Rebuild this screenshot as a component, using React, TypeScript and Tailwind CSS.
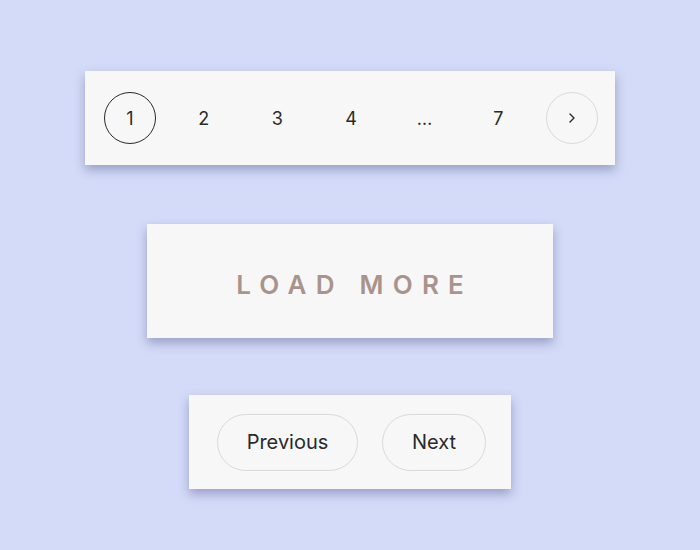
import React from "react";

const pages = ["1", "2", "3", "4", "…", "7"];

export default function App() {
  return (
    <div
      className="w-[700px] h-[550px] bg-[#d4dbf8] flex flex-col items-center"
      style={{ fontFamily: "Inter, 'Noto Sans', sans-serif" }}
    >
      {/* numbered pagination */}
      <div className="mt-[71px] w-[530px] h-[94px] bg-[#f7f7f7] shadow-[0_5px_10px_rgba(40,50,110,0.35)] flex items-center justify-between pl-[19px] pr-[17px]">
        {pages.map((p, i) => (
          <div
            key={p}
            className={
              i === 0
                ? "w-[52px] h-[52px] rounded-full border-[1.5px] border-[#2a2a2a] flex items-center justify-center text-[18px] text-[#2a2a2a]"
                : "w-[52px] h-[52px] rounded-full flex items-center justify-center text-[18px] text-[#2a2a2a]"
            }
          >
            {p}
          </div>
        ))}
        <div className="w-[52px] h-[52px] rounded-full border border-[#d9d9d9] flex items-center justify-center text-[#2a2a2a]">
          <svg width="10" height="12" viewBox="0 0 10 12" fill="none">
            <path d="M3 2l4 4-4 4" stroke="#2a2a2a" strokeWidth="1.4" strokeLinecap="round" strokeLinejoin="round" />
          </svg>
        </div>
      </div>

      {/* load more */}
      <div className="mt-[59px] w-[406px] h-[114px] bg-[#f7f7f7] shadow-[0_5px_10px_rgba(40,50,110,0.35)] flex items-center justify-center pt-[6px]">
        <span className="text-[26px] font-semibold tracking-[0.355em] text-[#a9948c] pl-[0.355em]">LOAD MORE</span>
      </div>

      {/* previous / next */}
      <div className="mt-[57px] w-[322px] h-[94px] bg-[#f7f7f7] shadow-[0_5px_10px_rgba(40,50,110,0.35)] flex items-center pl-[28px] gap-[24px]">
        <div className="w-[141px] h-[57px] rounded-full border border-[#d9d9d9] flex items-center justify-center text-[20px] text-[#2a2a2a]">
          Previous
        </div>
        <div className="w-[104px] h-[57px] rounded-full border border-[#d9d9d9] flex items-center justify-center text-[20px] text-[#2a2a2a]">
          Next
        </div>
      </div>
    </div>
  );
}
